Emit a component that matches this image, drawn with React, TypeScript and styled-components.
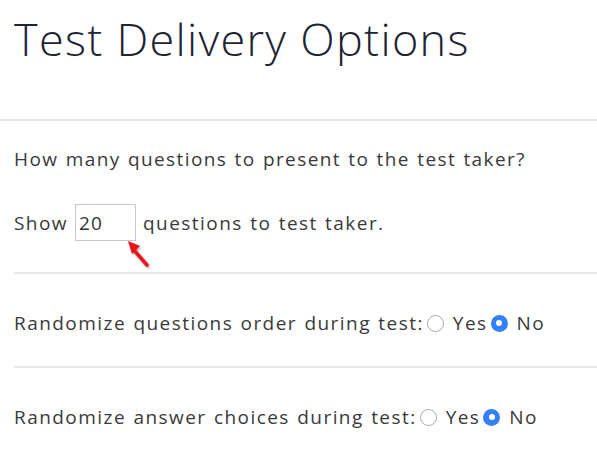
import React from "react";
import styled, { createGlobalStyle } from "styled-components";

const Global = createGlobalStyle`
  html, body { margin: 0; padding: 0; background: #fff; }
  body { font-family: "Open Sans", "Lato", sans-serif; color: #3a3a3a; }
  * { box-sizing: border-box; }
`;

const Page = styled.div`
  width: 597px;
  height: 450px;
  overflow: hidden;
  display: flex;
  flex-direction: column;
  & > * { flex-shrink: 0; }
`;

const Title = styled.h1`
  margin: 0;
  padding: 12px 0 0 14px;
  height: 119px;
  font-family: "Open Sans", "Lato", sans-serif;
  font-weight: 300;
  font-size: 45px;
  line-height: 54px;
  color: #1e2431;
  letter-spacing: 1.3px;
`;

const Divider = styled.div<{ $inset?: boolean }>`
  height: 2px;
  background: #e8e8e8;
  margin-left: ${(p) => (p.$inset ? "14px" : "0")};
`;

const Section = styled.div<{ $top: number; $bottom: number }>`
  padding: ${(p) => p.$top}px 0 ${(p) => p.$bottom}px 14px;
  display: flex;
  flex-direction: column;
  gap: 33px;
`;

const Text = styled.div`
  font-size: 19px;
  line-height: 24px;
  letter-spacing: 1.4px;
  word-spacing: 1px;
  color: #3a3a3a;
`;

const Row = styled.div`
  display: flex;
  align-items: center;
  white-space: pre;
  font-size: 19px;
  line-height: 24px;
  letter-spacing: 1.45px;
  word-spacing: 1px;
  color: #3a3a3a;
`;

const InputWrap = styled.span`
  position: relative;
  display: inline-flex;
  margin: 0 7px 0 7px;
`;

const NumberBox = styled.input`
  width: 61px;
  height: 37px;
  border: 1px solid #c8c8c8;
  border-radius: 0;
  padding: 0 0 0 3px;
  font-family: "Open Sans", "Lato", sans-serif;
  font-size: 19px;
  letter-spacing: 1px;
  color: #333;
  outline: none;
  background: #fff;
`;

const Arrow = styled.svg`
  position: absolute;
  left: 50px;
  top: 34px;
  overflow: visible;
`;

const Radio = styled.span<{ $checked?: boolean }>`
  width: 17px;
  height: 17px;
  border-radius: 50%;
  margin: 0 9px 0 3px;
  flex-shrink: 0;
  display: inline-flex;
  align-items: center;
  justify-content: center;
  border: ${(p) => (p.$checked ? "none" : "1.5px solid #a8a8a8")};
  background: ${(p) => (p.$checked ? "#3580f6" : "#fff")};
  &::after {
    content: "";
    display: ${(p) => (p.$checked ? "block" : "none")};
    width: 6px;
    height: 6px;
    border-radius: 50%;
    background: #fff;
  }
`;

const Choice = styled.span`
  display: inline-flex;
  align-items: center;
`;

function YesNo() {
  return (
    <>
      <Choice>
        <Radio />
        Yes
      </Choice>
      <Choice>
        <Radio $checked />
        No
      </Choice>
    </>
  );
}

export default function App() {
  return (
    <Page>
      <Global />
      <Title>Test Delivery Options</Title>
      <Divider />
      <Section $top={26} $bottom={31}>
        <Text>How many questions to present to the test taker?</Text>
        <Row>
          Show
          <InputWrap>
            <NumberBox defaultValue="20" />
            <Arrow width="30" height="34" viewBox="0 0 30 34">
              <defs>
                <filter id="sh" x="-50%" y="-50%" width="200%" height="200%">
                  <feDropShadow dx="1" dy="1.5" stdDeviation="1" floodColor="#000" floodOpacity="0.35" />
                </filter>
              </defs>
              <g filter="url(#sh)">
                <line x1="22" y1="27" x2="8" y2="11" stroke="#e8131b" strokeWidth="3.5" strokeLinecap="round" />
                <polygon points="3,3 15,8 7,16" fill="#e8131b" />
              </g>
            </Arrow>
          </InputWrap>
          questions to test taker.
        </Row>
      </Section>
      <Divider $inset />
      <Section $top={37} $bottom={31}>
        <Row>
          Randomize questions order during test:
          <YesNo />
        </Row>
      </Section>
      <Divider $inset />
      <Section $top={37} $bottom={31}>
        <Row>
          Randomize answer choices during test:
          <YesNo />
        </Row>
      </Section>
    </Page>
  );
}
